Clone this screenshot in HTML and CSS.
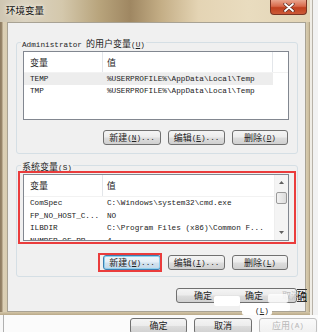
FILE: index.html
```html
<!DOCTYPE html>
<html>
<head>
<meta charset="utf-8">
<link rel="stylesheet" href="styles.css">
</head>
<body>
<div class="screen">
  <div class="top">
    <div class="win">
      <div class="titlebar">
        <span class="title c">环境变量</span>
        <div class="close">
          <svg width="12" height="9" viewBox="0 0 12 9"><path d="M2 1 L10 8 M10 1 L2 8" stroke="#5a2a20" stroke-width="3.2" stroke-linecap="round"/><path d="M2 1 L10 8 M10 1 L2 8" stroke="#ffffff" stroke-width="1.8" stroke-linecap="round"/></svg>
        </div>
      </div>
      <div class="body">
        <div class="frame-l"></div>
        <div class="client">
          <div class="group g1">
            <div class="legend"><span class="m">Administrator</span> <span class="c">的用户变量</span><span class="m">(<u>U</u>)</span></div>
            <div class="list l1">
              <div class="lhead">
                <div class="col1 c">变量</div>
                <div class="col2 c">值</div>
                <div class="col3"></div>
              </div>
              <div class="row sel"><div class="col1 m">TEMP</div><div class="col2 m">%USERPROFILE%\AppData\Local\Temp</div></div>
              <div class="row"><div class="col1 m">TMP</div><div class="col2 m">%USERPROFILE%\AppData\Local\Temp</div></div>
            </div>
            <div class="btns">
              <div class="btn w58"><span class="c">新建</span><span class="m">(<u>N</u>)...</span></div>
              <div class="btn w57"><span class="c">编辑</span><span class="m">(<u>E</u>)...</span></div>
              <div class="btn w56"><span class="c">删除</span><span class="m">(<u>D</u>)</span></div>
            </div>
          </div>
          <div class="group g2">
            <div class="legend"><span class="c">系统变量</span><span class="m">(<u>S</u>)</span></div>
            <div class="list l2">
              <div class="lmain">
                <div class="lhead h2">
                  <div class="col1 c">变量</div>
                  <div class="col2 wide c">值</div>
                </div>
                <div class="row r2"><div class="col1 m">ComSpec</div><div class="col2 m">C:\Windows\system32\cmd.exe</div></div>
                <div class="row r2"><div class="col1 m">FP_NO_HOST_C...</div><div class="col2 m">NO</div></div>
                <div class="row r2"><div class="col1 m">ILBDIR</div><div class="col2 m">C:\Program Files (x86)\Common F...</div></div>
                <div class="row r2"><div class="col1 m">NUMBER_OF_PR</div><div class="col2 m">4</div></div>
              </div>
              <div class="sbar">
                <div class="arrow"><svg width="5" height="3" viewBox="0 0 5 3"><path d="M0 3 L2.5 0 L5 3Z" fill="#606060"/></svg></div>
                <div class="thumb"></div>
                <div class="track"></div>
                <div class="arrow"><svg width="5" height="3" viewBox="0 0 5 3"><path d="M0 0 L2.5 3 L5 0Z" fill="#606060"/></svg></div>
              </div>
            </div>
            <div class="btns b2">
              <div class="btn w58 focus"><span class="c">新建</span><span class="m">(<u>W</u>)...</span></div>
              <div class="btn w57"><span class="c">编辑</span><span class="m">(<u>I</u>)...</span></div>
              <div class="btn w56"><span class="c">删除</span><span class="m">(<u>L</u>)</span></div>
            </div>
          </div>
          <div class="okrow">
            <div class="btn okwide"><span class="c">确定</span><span class="c">确定</span><span class="c faint">取消</span></div>
          </div>
          <div class="mark mark-list"></div>
          <div class="mark mark-btn"></div>
        </div>
        <div class="frame-r"></div>
      </div>
      <div class="frame-b"></div>
    </div>
    <div class="side"></div>
  </div>
  <div class="below">
    <div class="btn bw57"><span class="c">确定</span></div>
    <div class="btn bw58"><span class="c">取消</span></div>
    <div class="btn bw58 disabled"><span class="c">应用</span><span class="m">(A)</span></div>
  </div>
  <div class="blot bl1"></div>
  <div class="blot bl2"></div>
  <div class="blot bl3"></div>
  <div class="blot bl4"></div>
  <div class="paren m">(<u>L</u>)</div>
  <div class="frag c">确</div>
</div>
</body>
</html>
```
FILE: styles.css
```css
html, body {
  margin: 0;
  padding: 0;
}
body {
  width: 318px;
  height: 332px;
  overflow: hidden;
  background: #f6f6f6;
  color: #1e1e1e;
}
.m {
  font-family: "Liberation Mono", "DejaVu Sans Mono", monospace;
  font-size: 7.7px;
}
.c {
  font-family: "Noto Sans CJK SC", sans-serif;
  font-size: 9px;
}
u {
  text-decoration: underline;
  text-underline-offset: 1px;
}
.screen {
  position: relative;
  display: flex;
  flex-direction: column;
  width: 318px;
  height: 332px;
}
.top {
  display: flex;
  height: 315px;
}
.win {
  width: 310px;
  display: flex;
  flex-direction: column;
  background: linear-gradient(90deg, #cfc6b2 0, #dbd3c1 8%, #d4c8ac 20%, #b8a47c 32%, #9f8762 42%, #c4ae86 52%, #e4d4b4 64%, #e9dcbf 80%, #e2d4b6 100%);
}
.titlebar {
  height: 22px;
  display: flex;
  align-items: flex-start;
}
.title {
  margin: 4px 0 0 6px;
  font-size: 9.5px;
  line-height: 12px;
  color: #111;
  text-shadow: 0 0 3px #f4efe4, 0 0 5px #f4efe4;
}
.close {
  margin-left: auto;
  margin-right: 3px;
  width: 37px;
  height: 15px;
  box-sizing: border-box;
  border: 1px solid #7a3424;
  border-top: none;
  border-radius: 0 0 4px 4px;
  background: linear-gradient(#e9a58e 0, #d86a4c 45%, #c0401f 55%, #cc5a38 100%);
  display: flex;
  align-items: center;
  justify-content: center;
}
.body {
  display: flex;
  height: 290px;
}
.frame-l {
  width: 7px;
  background: linear-gradient(90deg, #8c7a60 0, #9c8a6e 2px, #dcd0b6 3px, #d8ccb0 7px);
}
.frame-r {
  width: 4px;
  background: linear-gradient(90deg, #d8ccb0 0, #cbbd9e 3px, #9c8c70 4px);
}
.frame-b {
  height: 3px;
  background: linear-gradient(#d4c6a8, #b8a888);
}
.side {
  width: 8px;
  background: linear-gradient(90deg, #f0ede6 0, #f0ede6 2px, #b8b2a8 2px, #b8b2a8 3px, #f2f2f2 3px);
}
.client {
  position: relative;
  width: 299px;
  box-sizing: border-box;
  border: 1px solid #a8a294;
  background: #f0f0f0;
  display: flex;
  flex-direction: column;
}
.group {
  margin-left: 8px;
  width: 282px;
  box-sizing: border-box;
  border: 1px solid #d5dfe5;
  border-radius: 3px;
  padding-left: 6px;
  display: flex;
  flex-direction: column;
}
.g1 {
  margin-top: 19px;
  padding-bottom: 8px;
}
.g2 {
  margin-top: 11px;
  padding-bottom: 6px;
}
.legend {
  margin: -7px 0 0 -2px;
  padding: 0 1px;
  height: 12px;
  line-height: 12px;
  width: max-content;
  background: #f0f0f0;
  color: #1e1e1e;
  white-space: pre;
}
.list {
  margin-top: 3px;
  width: 266px;
  box-sizing: border-box;
  border: 1px solid #828790;
  background: #ffffff;
  overflow: hidden;
}
.l1 {
  height: 69px;
}
.l2 {
  height: 67px;
  display: flex;
}
.lmain {
  flex: 1;
  overflow: hidden;
}
.lhead {
  display: flex;
  height: 21px;
  line-height: 21px;
  border-bottom: 1px solid #f2f2f2;
  box-sizing: border-box;
}
.h2 {
  height: 22px;
  line-height: 21px;
}
.col1 {
  width: 79px;
  box-sizing: border-box;
  padding-left: 6px;
  white-space: nowrap;
  overflow: hidden;
}
.col2 {
  width: 170px;
  box-sizing: border-box;
  padding-left: 4px;
  white-space: nowrap;
  overflow: hidden;
}
.col2.wide {
  width: 172px;
}
.lhead .col1,
.lhead .col2 {
  border-right: 1px solid #e3e6ea;
}
.lhead .col2.wide {
  border-right: none;
}
.col3 {
  flex: 1;
}
.row {
  display: flex;
  height: 12px;
  line-height: 12px;
  color: #222;
}
.row.sel .col1,
.row.sel .col2 {
  background: #ededed;
}
.r2 {
  height: 12.5px;
  line-height: 12.5px;
}
.sbar {
  width: 13px;
  background: #f4f4f4;
  border-left: 1px solid #eeeeee;
  display: flex;
  flex-direction: column;
  align-items: center;
}
.arrow {
  height: 15px;
  width: 13px;
  display: flex;
  align-items: center;
  justify-content: center;
}
.thumb {
  margin-top: 2px;
  width: 11px;
  height: 12px;
  box-sizing: border-box;
  border: 1px solid #9a9a9a;
  border-radius: 2px;
  background: linear-gradient(90deg, #f2f2f2, #dcdcdc);
}
.track {
  flex: 1;
}
.btns {
  display: flex;
  justify-content: flex-end;
  gap: 7px;
  margin-top: 10px;
  padding-right: 9px;
}
.b2 {
  margin-top: 14px;
}
.btn {
  height: 15px;
  box-sizing: border-box;
  border: 1px solid #707070;
  border-radius: 3px;
  background: linear-gradient(#f4f4f4 0, #ececec 48%, #dddddd 52%, #d0d0d0 100%);
  display: flex;
  align-items: center;
  justify-content: center;
  line-height: 12px;
  color: #222;
  white-space: nowrap;
}
.w58 { width: 58px; }
.w57 { width: 57px; }
.w56 { width: 56px; }
.btn.focus {
  border-color: #3c7fb1;
  box-shadow: inset 0 0 0 1px #8fd0ee;
  background: linear-gradient(#f0f6fa 0, #e4eef6 48%, #d2e2ee 52%, #c4d8e8 100%);
}
.okrow {
  display: flex;
  margin-top: 11px;
  padding-left: 168px;
}
.okwide {
  width: 121px;
  justify-content: flex-start;
  padding-left: 17px;
  gap: 33px;
}
.faint {
  color: #bdbdbd;
  margin-left: -14px;
}
.mark {
  position: absolute;
  border: 2px solid #ea3c3c;
  box-sizing: border-box;
}
.mark-list {
  left: 10px;
  top: 148px;
  width: 278px;
  height: 73px;
}
.mark-btn {
  left: 90px;
  top: 230px;
  width: 64px;
  height: 19px;
}
.below {
  flex: 1;
  display: flex;
  gap: 7px;
  padding: 3px 0 0 130px;
  background: linear-gradient(90deg, #f8f8f8 0, #f8f8f8 3px, #b0b0b0 3px, #b0b0b0 4px, #fbfbfb 4px);
  overflow: hidden;
}
.below .btn {
  height: 16px;
}
.bw57 { width: 57px; }
.bw58 { width: 58px; }
.btn.disabled {
  color: #b8b8b8;
  border-color: #c0c0c0;
  background: linear-gradient(#fafafa, #f0f0f0);
}
.blot {
  position: absolute;
  background: #ffffff;
  border-radius: 2px;
}
.bl1 { left: 214px; top: 296px; width: 26px; height: 10px; }
.bl2 { left: 240px; top: 303px; width: 50px; height: 8px; }
.bl3 { left: 268px; top: 294px; width: 20px; height: 9px; opacity: 0.8; }
.bl4 { left: 242px; top: 309px; width: 30px; height: 6px; }
.paren {
  position: absolute;
  left: 255px;
  top: 306px;
  line-height: 10px;
  color: #222;
}
.frag {
  position: absolute;
  left: 297px;
  top: 289px;
  line-height: 11px;
  font-size: 10px;
  color: #111;
  border-top: 1px solid #333;
  border-bottom: 1px solid #333;
}
```
